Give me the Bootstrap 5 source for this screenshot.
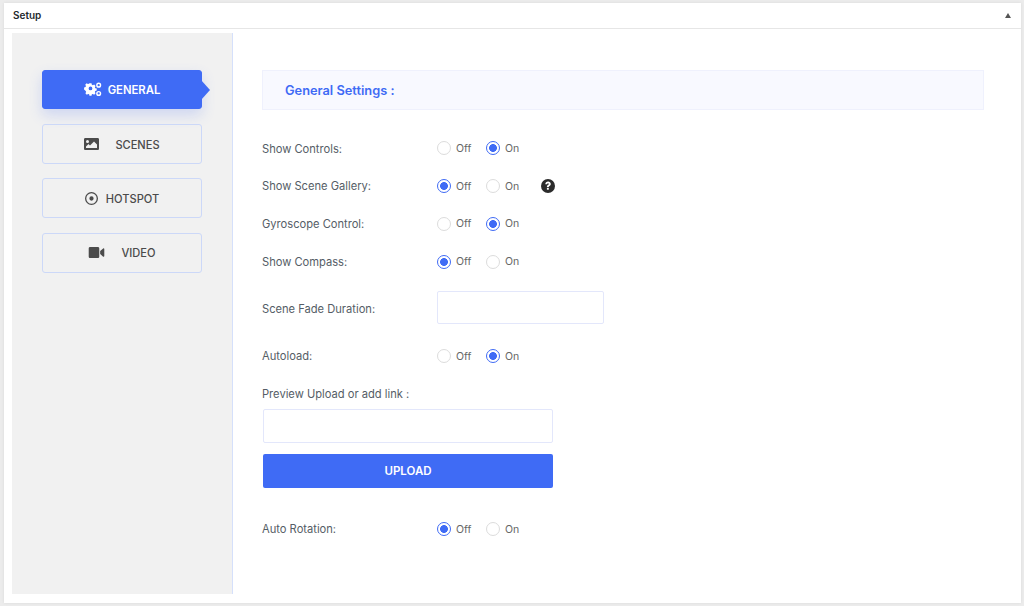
<!DOCTYPE html>
<html lang="en">
<head>
<meta charset="utf-8">
<title>Setup</title>
<link href="https://cdn.jsdelivr.net/npm/bootstrap@5.3.0/dist/css/bootstrap.min.css" rel="stylesheet">
<style>
html,body{height:100%}
body{background:#ececec;font-family:Inter,"Liberation Sans",sans-serif;font-size:11.15px;color:#555d66;overflow:hidden}
.shell{margin:3px 3px 3px 4px;height:600px;background:#fff;box-shadow:0 0 3px rgba(0,0,0,.08)}
.shell-head{height:26px;border-bottom:1px solid #e6e6e6;padding:0 9px 0 9px;color:#23282d;font-size:10px;font-weight:600}
.caret-up{width:0;height:0;border-left:3.5px solid transparent;border-right:3.5px solid transparent;border-bottom:5px solid #555;margin-right:1px}
.shell-body{padding:4px 0 9px 8px;height:574px}
.side{width:221px;flex:none;background:#f1f1f1;border-right:1px solid #d5e0fb;padding:37px 30px 0 30px}
.tab{height:40px;margin-bottom:14.2px;border:1px solid #ccd8f8;border-radius:3px;color:#4b4b4b;font-size:11.1px;font-weight:500;position:relative}
.tab span{padding-top:2px}
.tab.active-tab{height:39px;margin-bottom:15.2px;background:#3f6bf5;border-color:#3f6bf5;color:#fff;box-shadow:0 6px 14px rgba(63,107,245,.2);font-size:11.3px;gap:6px}
.tab.active-tab::after{content:"";position:absolute;left:100%;top:9px;border-top:10px solid transparent;border-bottom:10px solid transparent;border-left:9px solid #3f6bf5}
.tab-icon{fill:currentColor;flex:none}
.main{padding:37px 37px 0 29px;flex:1;min-width:0}
.title-box{height:40px;background:#f8f9ff;border:1px solid #eff1fd;padding:2px 0 0 22px;color:#3f6bf5;font-size:12.8px;font-weight:600;margin-bottom:19.6px}
.opt-row{height:37.7px}
.opt-name{width:175px;flex:none;padding-top:1px}
.opt-radio{gap:5px;width:49px;flex:none;margin:0}
.opt-radio .form-check-input{width:14px;height:14px;margin:0;flex:none;border:1px solid #dcdcdc;background:#fff;float:none}
.opt-radio .form-check-input:checked{border-color:#3f6bf5;background-color:#fff;background-image:radial-gradient(circle,#3f6bf5 0,#3f6bf5 3.6px,transparent 4.2px);box-shadow:none}
.opt-radio label{font-size:10.5px;color:#666;padding-top:1px}
.help-icon{margin-left:6px}
.fade-row{height:57px}
.text-field{border:1px solid #e3e7fb;border-radius:2px;height:33px;width:167px;padding:0 8px;background:#fff;font-size:12px}
.fade-row .text-field{margin-bottom:2px}
.text-field.wide{width:290px;height:34px;margin-left:1px}
.preview-label{margin-top:6.8px;height:27px;padding-bottom:2px}
.upload-btn{width:290px;height:34px;margin-top:11px;margin-left:1px;padding:2px 0 0;background:#3f6bf5;border:0;border-radius:2px;color:#fff;font-size:11.5px;font-weight:600;display:block}
.upload-btn:hover{background:#3f6bf5;color:#fff}
.rotation-row{margin-top:22.6px}
</style>
</head>
<body>
<div class="shell">
  <div class="shell-head d-flex align-items-center justify-content-between">
    <span>Setup</span>
    <span class="caret-up"></span>
  </div>
  <div class="shell-body d-flex">
    <nav class="side">
      <div class="tab active-tab d-flex align-items-center justify-content-center fw-semibold">
        <svg class="tab-icon" width="18" height="15" viewBox="0 0 19 15"><path fill-rule="evenodd" d="M5.300 2h2.400l.4 1.700 1.200.5 1.500-.9 1.700 1.700-.9 1.500.5 1.200 1.700.4v2.400l-1.700.4-.5 1.200.9 1.500-1.700 1.700-1.500-.9-1.200.5-.4 1.700H5.300l-.4-1.700-1.200-.5-1.500.9-1.700-1.700.9-1.500-.5-1.200L-1 9.200V6.800l1.700-.4.500-1.200-.9-1.500 1.700-1.700 1.500.9 1.200-.5zM6.500 5.800a2.200 2.200 0 1 0 0 4.400 2.200 2.200 0 0 0 0-4.400z" transform="translate(1 -.8) scale(.9)"/><path fill-rule="evenodd" d="M15.500.2a2.700 2.700 0 1 1 0 5.400 2.700 2.700 0 0 1 0-5.400zm0 1.500a1.200 1.200 0 1 0 0 2.400 1.200 1.200 0 0 0 0-2.400zM15.500 9a2.700 2.700 0 1 1 0 5.400 2.700 2.700 0 0 1 0-5.400zm0 1.500a1.200 1.200 0 1 0 0 2.400 1.200 1.200 0 0 0 0-2.400z"/></svg>
        <span>GENERAL</span>
      </div>
      <div class="tab d-flex align-items-center justify-content-center gap-3">
        <svg class="tab-icon" width="15" height="12" viewBox="0 0 15 12"><path fill-rule="evenodd" d="M1.300 0h12.400C14.400 0 15 .6 15 1.300v9.400c0 .7-.6 1.300-1.300 1.300H1.300C.6 12 0 11.400 0 10.700V1.300C0 .6.600 0 1.300 0zM3.500 2A1.500 1.500 0 1 0 3.500 5 1.500 1.500 0 0 0 3.500 2zM2 10h11V6.500L10 3.500 6 7.500 4.500 6 2 8.500z"/></svg>
        <span>SCENES</span>
      </div>
      <div class="tab d-flex align-items-center justify-content-center gap-2">
        <svg class="tab-icon" width="13" height="13" viewBox="0 0 14 14"><path fill-rule="evenodd" d="M7 0a7 7 0 1 1 0 14A7 7 0 0 1 7 0zm0 1.400a5.600 5.600 0 1 0 0 11.200A5.600 5.600 0 0 0 7 1.400zM7 4.700a2.300 2.300 0 1 1 0 4.600 2.300 2.300 0 0 1 0-4.600z"/></svg>
        <span>HOTSPOT</span>
      </div>
      <div class="tab d-flex align-items-center justify-content-center gap-3">
        <svg class="tab-icon" width="17" height="11" viewBox="0 0 17 12"><path d="M1.500 0h8.500c.8 0 1.500.7 1.500 1.500v9c0 .8-.7 1.500-1.500 1.500H1.500C.7 12 0 11.300 0 10.500v-9C0 .7.700 0 1.500 0zM12.500 4.300 15.800 1.500c.5-.4 1.200 0 1.200.6v7.800c0 .6-.7 1-1.200.6L12.500 7.700z"/></svg>
        <span>VIDEO</span>
      </div>
    </nav>
    <main class="main">
      <div class="title-box d-flex align-items-center">General Settings :</div>

      <div class="opt-row d-flex align-items-center">
        <span class="opt-name">Show Controls:</span>
        <div class="form-check opt-radio d-flex align-items-center p-0"><input class="form-check-input" type="radio" name="a" id="a0"><label for="a0">Off</label></div>
        <div class="form-check opt-radio d-flex align-items-center p-0"><input class="form-check-input" type="radio" name="a" id="a1" checked><label for="a1">On</label></div>
      </div>
      <div class="opt-row d-flex align-items-center">
        <span class="opt-name">Show Scene Gallery:</span>
        <div class="form-check opt-radio d-flex align-items-center p-0"><input class="form-check-input" type="radio" name="b" id="b0" checked><label for="b0">Off</label></div>
        <div class="form-check opt-radio d-flex align-items-center p-0"><input class="form-check-input" type="radio" name="b" id="b1"><label for="b1">On</label></div>
        <svg class="help-icon" width="14" height="14" viewBox="0 0 14 14"><circle cx="7" cy="7" r="7" fill="#2b2b2b"/><path d="M4.300 5.300C4.400 3.600 5.600 2.600 7.100 2.600c1.500 0 2.700 1 2.700 2.300 0 1.100-.7 1.600-1.300 2-.5.300-.7.500-.7 1.100H5.900c0-1.100.4-1.700 1.100-2.100.5-.3.800-.5.800-.9 0-.4-.4-.7-.8-.7-.5 0-.8.300-.9 1z" fill="#fff"/><rect x="5.900" y="8.800" width="1.900" height="1.900" fill="#fff"/></svg>
      </div>
      <div class="opt-row d-flex align-items-center">
        <span class="opt-name">Gyroscope Control:</span>
        <div class="form-check opt-radio d-flex align-items-center p-0"><input class="form-check-input" type="radio" name="c" id="c0"><label for="c0">Off</label></div>
        <div class="form-check opt-radio d-flex align-items-center p-0"><input class="form-check-input" type="radio" name="c" id="c1" checked><label for="c1">On</label></div>
      </div>
      <div class="opt-row d-flex align-items-center">
        <span class="opt-name">Show Compass:</span>
        <div class="form-check opt-radio d-flex align-items-center p-0"><input class="form-check-input" type="radio" name="d" id="d0" checked><label for="d0">Off</label></div>
        <div class="form-check opt-radio d-flex align-items-center p-0"><input class="form-check-input" type="radio" name="d" id="d1"><label for="d1">On</label></div>
      </div>
      <div class="fade-row d-flex align-items-center">
        <span class="opt-name">Scene Fade Duration:</span>
        <input class="text-field" type="text" aria-label="Scene Fade Duration">
      </div>
      <div class="opt-row d-flex align-items-center">
        <span class="opt-name">Autoload:</span>
        <div class="form-check opt-radio d-flex align-items-center p-0"><input class="form-check-input" type="radio" name="e" id="e0"><label for="e0">Off</label></div>
        <div class="form-check opt-radio d-flex align-items-center p-0"><input class="form-check-input" type="radio" name="e" id="e1" checked><label for="e1">On</label></div>
      </div>
      <div class="preview-label d-flex align-items-center">Preview Upload or add link :</div>
      <input class="text-field wide d-block" type="text" aria-label="Preview Upload or add link">
      <button class="btn upload-btn" type="button">UPLOAD</button>
      <div class="opt-row rotation-row d-flex align-items-center">
        <span class="opt-name">Auto Rotation:</span>
        <div class="form-check opt-radio d-flex align-items-center p-0"><input class="form-check-input" type="radio" name="f" id="f0" checked><label for="f0">Off</label></div>
        <div class="form-check opt-radio d-flex align-items-center p-0"><input class="form-check-input" type="radio" name="f" id="f1"><label for="f1">On</label></div>
      </div>
    </main>
  </div>
</div>
<script src="https://cdn.jsdelivr.net/npm/bootstrap@5.3.0/dist/js/bootstrap.bundle.min.js"></script>
</body>
</html>
